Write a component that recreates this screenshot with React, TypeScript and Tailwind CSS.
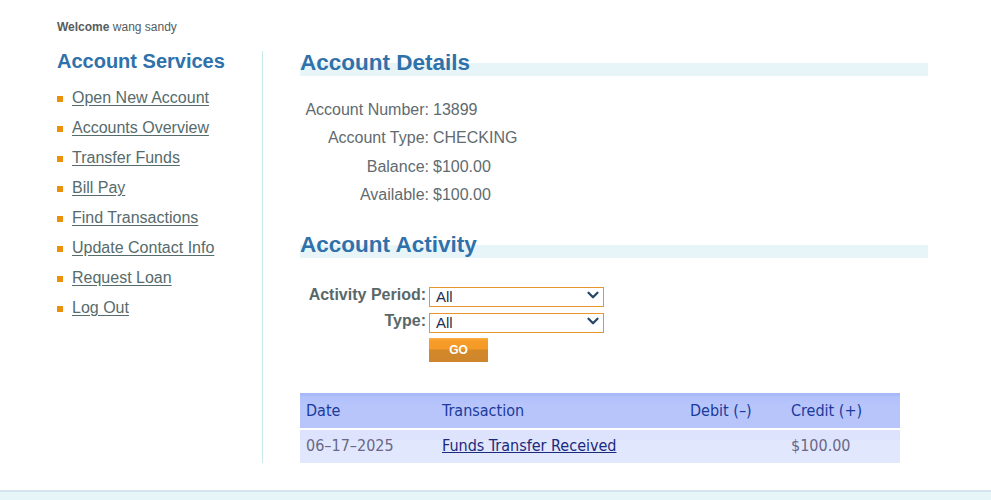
import React from "react";
import { ChevronDown } from "lucide-react";

const links = [
  "Open New Account",
  "Accounts Overview",
  "Transfer Funds",
  "Bill Pay",
  "Find Transactions",
  "Update Contact Info",
  "Request Loan",
  "Log Out",
];

const details: [string, string][] = [
  ["Account Number:", "13899"],
  ["Account Type:", "CHECKING"],
  ["Balance:", "$100.00"],
  ["Available:", "$100.00"],
];

function Title({ children }: { children: React.ReactNode }) {
  return (
    <div className="h-[25px] bg-[linear-gradient(to_bottom,transparent_12px,#e7f5f8_12px)]">
      <h1 className="text-[22.5px] leading-[23px] font-bold text-[#2f71aa]">{children}</h1>
    </div>
  );
}

function Select() {
  return (
    <div className="relative w-[175px] h-[20px]">
      <select className="appearance-none w-full h-full border border-[#e8952c] bg-white pl-[6px] text-[15px] font-normal leading-[18px] text-[#1f2f4f] outline-none">
        <option>All</option>
      </select>
      <ChevronDown
        className="absolute right-[2px] top-[1px] pointer-events-none text-[#24476b]"
        size={18}
        strokeWidth={3}
      />
    </div>
  );
}

export default function App() {
  return (
    <div className="w-[991px] h-[500px] bg-white font-['Liberation_Sans',Arial,sans-serif] overflow-hidden flex flex-col">
      <div className="pl-[57px] pt-[19px] text-[12px] leading-[16px] text-[#555c5c]">
        <b>Welcome</b> wang sandy
      </div>
      <div className="flex pl-[57px] mt-[16px]">
        <div className="w-[206px] border-r border-[#c6e9e7]">
          <h2 className="text-[20px] leading-[20px] font-bold text-[#2f71aa]">Account Services</h2>
          <ul className="mt-[12px]">
            {links.map((l) => (
              <li key={l} className="flex items-center h-[30px]">
                <span className="w-[6px] h-[6px] bg-[#ea900b] mr-[9px] mt-[2px]" />
                <a href="#" className="text-[16px] text-[#566b6b] underline underline-offset-[2px]">
                  {l}
                </a>
              </li>
            ))}
          </ul>
        </div>
        <div className="pl-[37px] w-[665px]">
          <Title>Account Details</Title>
          <div className="mt-[20px] text-[16px] text-[#5f6b70]">
            {details.map(([k, v]) => (
              <div key={k} className="flex h-[28.3px] items-center">
                <div className="w-[129px] text-right">{k}</div>
                <div className="pl-[4px]">{v}</div>
              </div>
            ))}
          </div>
          <div className="mt-[24px]">
            <Title>Account Activity</Title>
          </div>
          <div className="mt-[27px] text-[16px] font-bold text-[#586868]">
            <div className="flex items-center h-[20px]">
              <div className="w-[126px] text-right">Activity Period:</div>
              <div className="ml-[3px]">
                <Select />
              </div>
            </div>
            <div className="flex items-center h-[20px] mt-[6px]">
              <div className="w-[126px] text-right">Type:</div>
              <div className="ml-[3px]">
                <Select />
              </div>
            </div>
            <div className="ml-[129px] mt-[7px] h-[24px]">
              <button className="block w-[59px] h-[24px] bg-[linear-gradient(to_bottom,#fbb046_0px,#f69c28_3px,#f59a27_11px,#d3882a_12px,#cf852b_24px)] text-white text-[12px] font-bold leading-[24px]">
                GO
              </button>
            </div>
          </div>
          <div className="mt-[31px] w-[600px] font-['DejaVu_Sans_Condensed','DejaVu_Sans',sans-serif] text-[16px]">
            <div className="flex h-[37px] items-center pt-[1px] bg-[linear-gradient(to_bottom,#a9baf9_0px,#a9baf9_3px,#b0c0fa_3px,#b7c5fb_12px,#b7c5fb_100%)] text-[#1b3a9c] border-b-[2px] border-white">
              <div className="w-[142px] pl-[6px]">Date</div>
              <div className="w-[248px]">Transaction</div>
              <div className="w-[101px]">Debit (–)</div>
              <div>Credit (+)</div>
            </div>
            <div className="flex h-[33px] items-center pb-[2px] bg-[linear-gradient(to_bottom,#dde3fc_0px,#dde3fc_10px,#e1e7fd_10px)]">
              <div className="w-[142px] pl-[6px] text-[#6a6888]">06–17–2025</div>
              <div className="w-[248px]">
                <a href="#" className="text-[#1b2a7e] underline">Funds Transfer Received</a>
              </div>
              <div className="w-[101px]"></div>
              <div className="text-[#6a6888]">$100.00</div>
            </div>
          </div>
        </div>
      </div>
      <div className="mt-[27px] border-t-[2px] border-[#d5e3ee] bg-[#e6f5f7] flex-1" />
    </div>
  );
}
